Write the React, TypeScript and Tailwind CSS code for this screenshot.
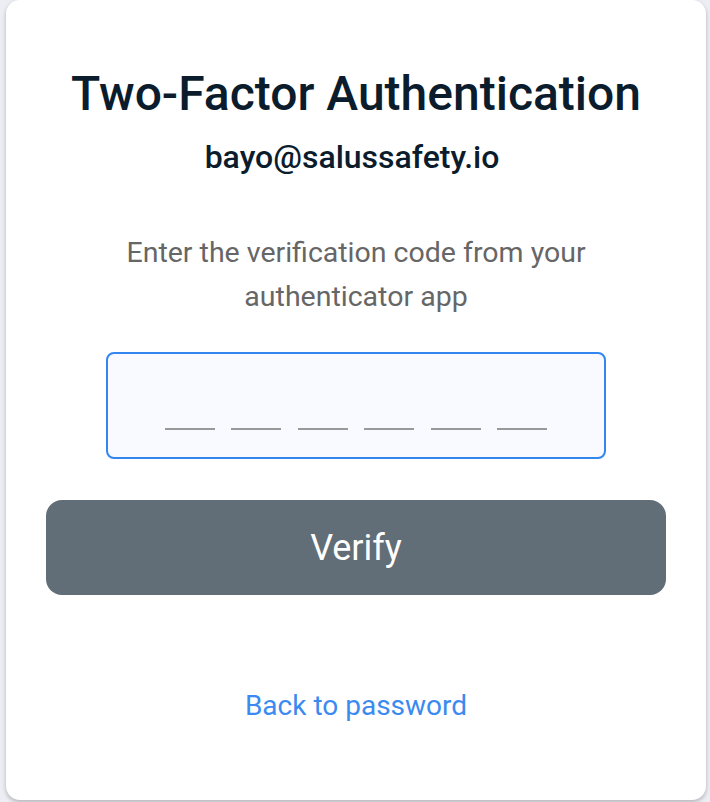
export default function App() {
  return (
    <div
      className="h-[802px] w-[710px] overflow-hidden bg-[#eceef3] pl-[6px]"
      style={{ fontFamily: "Roboto, 'Noto Sans', sans-serif" }}
    >
      <div className="flex h-[800px] w-[700px] flex-col items-center rounded-[14px] bg-white px-[40px] shadow-[0_2px_4px_rgba(0,0,0,0.25)]">
        <h1 className="mt-[66px] text-[48px] font-medium leading-[56px] text-[#0b1c2c]">
          Two-Factor Authentication
        </h1>
        <div className="mt-[15px] pr-[8px] text-[32px] font-medium leading-[40px] text-[#0b1c2c]">
          bayo@salussafety.io
        </div>
        <p className="mt-[54px] w-[530px] text-center text-[28.5px] leading-[44px] text-[#666666]">
          Enter the verification code from your authenticator app
        </p>
        <div className="mt-[33px] flex h-[107px] w-[500px] items-end justify-center rounded-[8px] border-2 border-[#3385f0] bg-[#f8faff] pb-[27px]">
          <div className="flex gap-[16.6px]">
            {[0, 1, 2, 3, 4, 5].map((i) => (
              <span key={i} className="block h-[2px] w-[50px] bg-[#999999]" />
            ))}
          </div>
        </div>
        <button className="mt-[41px] flex h-[95px] w-full items-center justify-center rounded-[16px] bg-[#616d77] text-[36px] text-white">
          Verify
        </button>
        <a className="mt-[93px] text-[28px] leading-[36px] text-[#3b8af0]" href="#">
          Back to password
        </a>
      </div>
    </div>
  );
}
